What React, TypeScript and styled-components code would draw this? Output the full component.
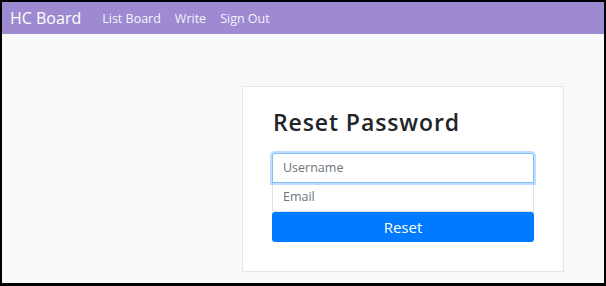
import React from "react";
import styled, { createGlobalStyle } from "styled-components";

const GlobalStyle = createGlobalStyle`
  html, body {
    margin: 0;
    padding: 0;
    background: #000;
  }
  body {
    font-family: "Open Sans", "Noto Sans", sans-serif;
  }
`;

const Frame = styled.div`
  box-sizing: border-box;
  width: 606px;
  height: 286px;
  border: 2px solid #000;
  border-bottom-width: 3px;
  background: #f9f9f9;
  display: flex;
  flex-direction: column;
  overflow: hidden;
`;

const NavBar = styled.nav`
  height: 32px;
  background: #9e8ad1;
  display: flex;
  align-items: center;
  padding: 0 8px;
  flex-shrink: 0;
`;

const Brand = styled.a`
  color: #fff;
  font-size: 16px;
  margin-right: 21px;
  text-decoration: none;
`;

const NavLinks = styled.div`
  display: flex;
  gap: 14px;
`;

const NavLink = styled.a`
  color: rgba(255, 255, 255, 0.92);
  font-size: 12.5px;
  text-decoration: none;
`;

const Main = styled.main`
  flex: 1;
  padding: 52px 0 0 240px;
`;

const Card = styled.section`
  box-sizing: border-box;
  width: 322px;
  height: 186px;
  background: #fff;
  border: 1px solid #e6e6e6;
  padding: 22px 29px 0;
`;

const Title = styled.h2`
  margin: 0 0 16px 1px;
  font-size: 23px;
  font-weight: 600;
  letter-spacing: 0.9px;
  color: #212529;
  line-height: 1.2;
`;

const Field = styled.input<{ $pos: "top" | "bottom" }>`
  display: block;
  box-sizing: border-box;
  width: 262px;
  height: ${(p) => (p.$pos === "top" ? 30 : 29)}px;
  margin: 0;
  padding: 0 10px;
  font-family: inherit;
  font-size: 12.5px;
  color: #495057;
  background: #fff;
  border: 1px solid ${(p) => (p.$pos === "top" ? "#80bdff" : "#dee2e6")};
  border-top-width: ${(p) => (p.$pos === "top" ? 1 : 0)}px;
  border-radius: ${(p) => (p.$pos === "top" ? "3px 3px 0 0" : "0")};
  box-shadow: ${(p) => (p.$pos === "top" ? "0 0 0 2px rgba(0, 123, 255, 0.25)" : "none")};
  outline: none;
  position: relative;
  z-index: ${(p) => (p.$pos === "top" ? 1 : 0)};

  &::placeholder {
    color: #6c757d;
  }
`;

const Button = styled.button`
  display: block;
  width: 262px;
  height: 30px;
  border: none;
  border-radius: 3px;
  background: #007bff;
  color: #fff;
  font-family: inherit;
  font-size: 15px;
  cursor: pointer;
`;

export default function App() {
  return (
    <>
      <GlobalStyle />
      <Frame>
        <NavBar>
          <Brand href="#">HC Board</Brand>
          <NavLinks>
            <NavLink href="#">List Board</NavLink>
            <NavLink href="#">Write</NavLink>
            <NavLink href="#">Sign Out</NavLink>
          </NavLinks>
        </NavBar>
        <Main>
          <Card>
            <Title>Reset Password</Title>
            <Field $pos="top" placeholder="Username" />
            <Field $pos="bottom" placeholder="Email" />
            <Button>Reset</Button>
          </Card>
        </Main>
      </Frame>
    </>
  );
}
